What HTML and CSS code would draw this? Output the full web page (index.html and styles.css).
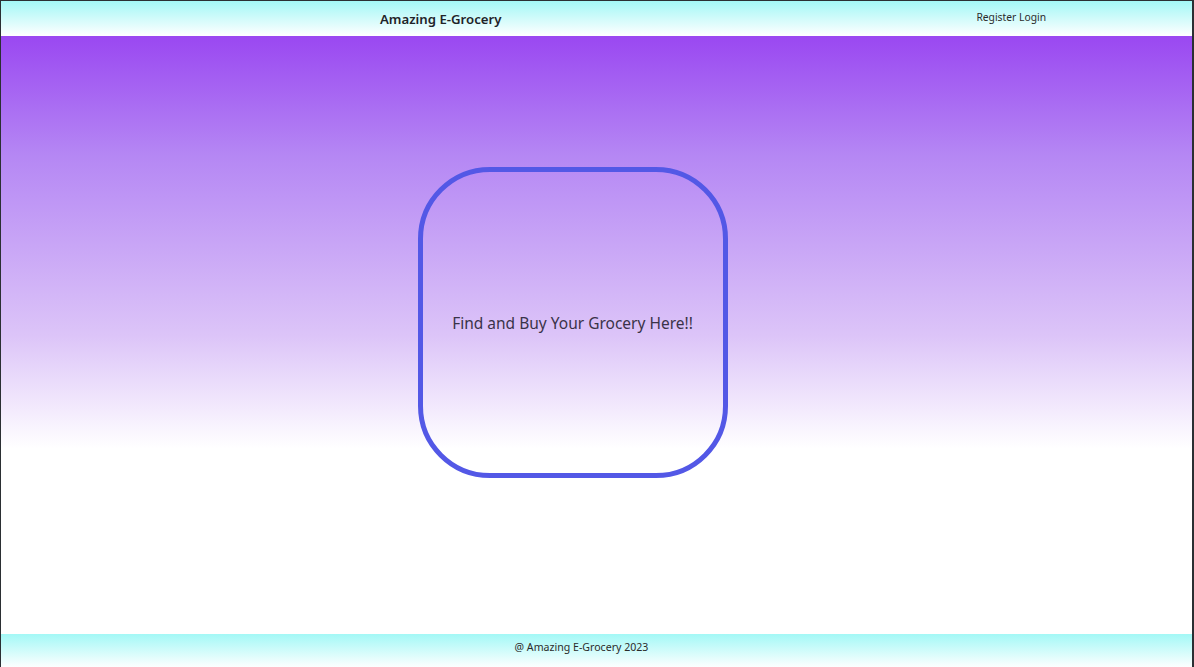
FILE: index.html
```html
<!DOCTYPE html>
<html lang="en">
<head>
<meta charset="utf-8">
<title>Amazing E-Grocery</title>
<link rel="stylesheet" href="styles.css">
</head>
<body>
<div class="frame">
  <header class="topbar">
    <div class="brand">Amazing E-Grocery</div>
    <nav class="links"><a href="#">Register</a> <a href="#">Login</a></nav>
  </header>
  <main class="hero">
    <div class="card">
      <p class="tagline">Find and Buy Your Grocery Here!!</p>
    </div>
  </main>
  <footer class="footer">@ Amazing E-Grocery 2023</footer>
</div>
</body>
</html>
```
FILE: styles.css
```css
* { box-sizing: border-box; }
html, body { margin: 0; padding: 0; height: 100%; }
body {
  background: #2b2f33;
  font-family: "Noto Sans", "Open Sans", "Liberation Sans", sans-serif;
  color: #2a2a2a;
}
.frame {
  height: 667px;
  margin: 1px 2px 0 1px;
  background: #ffffff;
  display: flex;
  flex-direction: column;
  overflow: hidden;
}
.topbar {
  height: 35px;
  flex: none;
  display: flex;
  align-items: center;
  justify-content: space-between;
  padding: 0 146px 0 379px;
  background: linear-gradient(to bottom, #a3f7f6 0%, #ffffff 100%);
}
.brand {
  font-size: 13.2px;
  font-weight: 600;
  color: #1f2328;
  padding-top: 1px;
}
.links {
  font-size: 10.3px;
  color: #2b2b2b;
  padding-bottom: 4px;
}
.links a { color: inherit; text-decoration: none; }
.hero {
  flex: 1;
  display: flex;
  align-items: center;
  justify-content: center;
  padding: 0 48px 25px 0;
  background: linear-gradient(to bottom, #9a48f1 0%, #b587f4 20%, #dcc4f8 50%, #f4ecfd 63%, #ffffff 69%, #ffffff 100%);
}
.card {
  width: 310px;
  height: 311px;
  border: 5px solid #5358e6;
  border-radius: 72px;
  display: flex;
  align-items: center;
  justify-content: center;
}
.tagline {
  margin: 0;
  font-size: 15.5px;
  color: #3a3348;
}
.footer {
  height: 34px;
  flex: none;
  display: flex;
  align-items: center;
  justify-content: center;
  padding: 0 30px 8px 0;
  font-size: 10.6px;
  color: #2b2b2b;
  background: linear-gradient(to bottom, #a3f8f6 0%, #ffffff 100%);
}
```
